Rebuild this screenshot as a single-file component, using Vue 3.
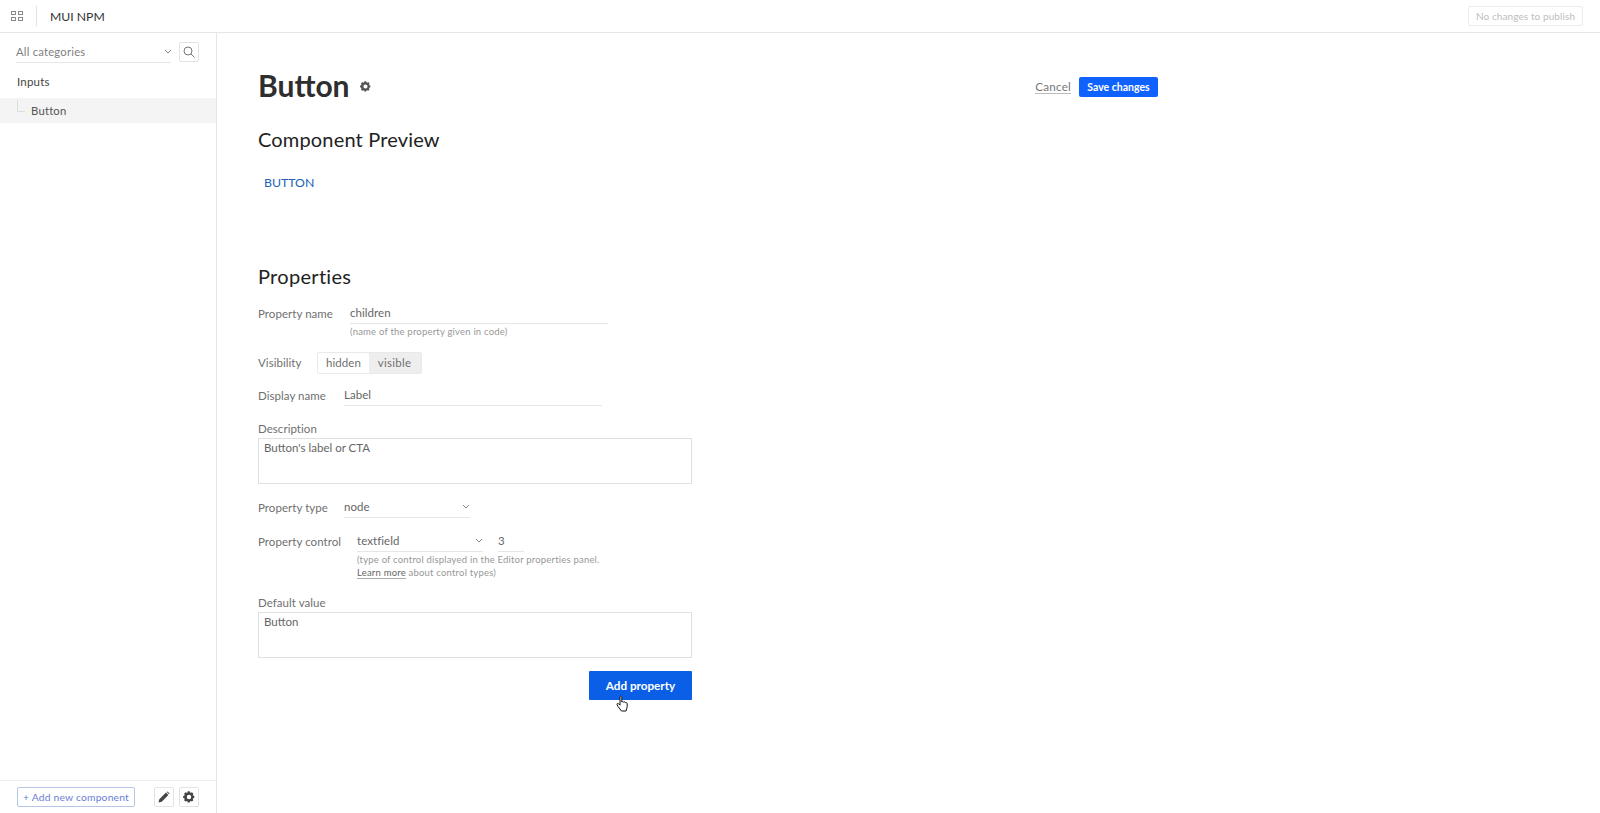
<script setup>
const gear = "M12 8.2a3.8 3.8 0 1 0 0 7.6 3.8 3.8 0 0 0 0-7.6zm9 5.4-2 .5a7.2 7.2 0 0 1-.6 1.5l1 1.8-2.4 2.4-1.8-1a7.2 7.2 0 0 1-1.5.6l-.5 2h-3.4l-.5-2a7.2 7.2 0 0 1-1.5-.6l-1.8 1-2.4-2.4 1-1.8a7.2 7.2 0 0 1-.6-1.5l-2-.5v-3.4l2-.5a7.2 7.2 0 0 1 .6-1.5l-1-1.8L6.1 3.9l1.8 1a7.2 7.2 0 0 1 1.5-.6l.5-2h3.4l.5 2a7.2 7.2 0 0 1 1.5.6l1.8-1 2.4 2.4-1 1.8a7.2 7.2 0 0 1 .6 1.5l2 .5z"
</script>

<template>
  <div class="page">
    <header class="top">
      <svg class="grid-icon" width="12" height="12" viewBox="0 0 12 12" fill="none" stroke="#888" stroke-width="1">
        <rect x="0.5" y="1.5" width="4" height="3" /><rect x="7.5" y="1.5" width="4" height="3" />
        <rect x="0.5" y="7.5" width="4" height="3" /><rect x="7.5" y="7.5" width="4" height="3" />
      </svg>
      <span class="top-sep"></span>
      <span class="brand">MUI NPM</span>
      <button class="publish">No changes to publish</button>
    </header>
    <div class="body">
      <aside class="side">
        <div class="side-main">
          <div class="filter">
            <div class="cat">
              <span>All categories</span>
              <svg width="8" height="5" viewBox="0 0 8 5" fill="none" stroke="#888"><path d="M1 1l3 3 3-3" /></svg>
            </div>
            <span class="square">
              <svg width="12" height="12" viewBox="0 0 12 12" fill="none" stroke="#777"><circle cx="5" cy="5" r="4" /><path d="M8 8l3.5 3.5" /></svg>
            </span>
          </div>
          <div class="group">Inputs</div>
          <div class="item"><span class="elbow"></span>Button</div>
        </div>
        <footer class="side-foot">
          <button class="add">+ Add new component</button>
          <span class="square">
            <svg width="12" height="12" viewBox="0 0 12 12" fill="#444"><path d="M0.5 11.5l.8-3.2L8 1.6 10.4 4l-6.7 6.700zM8.700.9l.8-.5 2.100 2.100-.5.8z" /></svg>
          </span>
          <span class="square">
            <svg width="14" height="14" viewBox="0 0 24 24" fill="#444" fill-rule="evenodd"><path :d="gear" /></svg>
          </span>
        </footer>
      </aside>
      <main class="main">
        <div class="head">
          <div class="title-wrap">
            <h1>Button</h1>
            <svg class="title-gear" width="13" height="13" viewBox="0 0 24 24" fill="#555" fill-rule="evenodd"><path :d="gear" /></svg>
          </div>
          <div class="actions">
            <a class="cancel">Cancel</a>
            <button class="save">Save changes</button>
          </div>
        </div>
        <h2 class="preview-title">Component Preview</h2>
        <div class="preview-btn">BUTTON</div>
        <h2 class="props-title">Properties</h2>
        <form class="form">
          <div class="row name-row">
            <label>Property name</label>
            <div class="col">
              <div class="field w258">children</div>
              <div class="hint first">(name of the property given in code)</div>
            </div>
          </div>
          <div class="row vis-row">
            <label>Visibility</label>
            <div class="toggle"><span class="opt">hidden</span><span class="opt on">visible</span></div>
          </div>
          <div class="row disp-row">
            <label>Display name</label>
            <div class="field w258">Label</div>
          </div>
          <div class="block desc-block">
            <label>Description</label>
            <div class="area">Button's label or CTA</div>
          </div>
          <div class="row type-row">
            <label>Property type</label>
            <div class="field sel w126">node
              <svg width="8" height="5" viewBox="0 0 8 5" fill="none" stroke="#888"><path d="M1 1l3 3 3-3" /></svg>
            </div>
          </div>
          <div class="row ctrl-row">
            <label>Property control</label>
            <div class="col">
              <div class="ctrl-fields">
                <div class="field sel w126">textfield
                  <svg width="8" height="5" viewBox="0 0 8 5" fill="none" stroke="#888"><path d="M1 1l3 3 3-3" /></svg>
                </div>
                <div class="field w26">3</div>
              </div>
              <div class="hint two">(type of control displayed in the Editor properties panel.<br /><a>Learn more</a> about control types)</div>
            </div>
          </div>
          <div class="block def-block">
            <label>Default value</label>
            <div class="area">Button</div>
          </div>
          <div class="submit">
            <button type="button" class="add-prop">Add property</button>
            <svg class="cursor" width="14" height="18" viewBox="0 0 14 18" fill="#fff" stroke="#111" stroke-width="1">
              <path d="M4 1.500c.8-.8 1.800-.3 1.800.7V7c.6-.7 1.700-.5 1.900.3.600-.6 1.600-.4 1.800.4.700-.4 1.600 0 1.700.9.200 1.800.1 3.500-.5 5.100l-.7 2.300H5.500L2 11.500 1 9.500c-.3-.9.800-1.500 1.500-.8L4 10.200z" />
            </svg>
          </div>
        </form>
      </main>
    </div>
  </div>
</template>

<style>
html, body { margin: 0; background: #fff; }
</style>

<style scoped>
.page { height: 813px; display: flex; flex-direction: column; overflow: hidden; font-family: Lato, "Liberation Sans", sans-serif; color: #666; font-size: 11.5px; }
.top { height: 32px; flex: none; display: flex; align-items: center; border-bottom: 1px solid #e6e6e6; box-sizing: content-box; }
.grid-icon { margin-left: 11px; }
.top-sep { width: 1px; height: 20px; background: #e2e2e2; margin-left: 13px; }
.brand { margin-left: 13px; font-size: 12.2px; color: #333; }
.publish { margin-left: auto; margin-right: 17px; width: 115px; height: 20px; padding: 0; border: 1px solid #ececec; border-radius: 2px; background: #fff; color: #bdbdbd; font: 10px Lato, sans-serif; letter-spacing: 0.1px; }
.body { flex: 1; display: flex; min-height: 0; }
.side { width: 216px; flex: none; border-right: 1px solid #e6e6e6; display: flex; flex-direction: column; }
.side-main { flex: 1; }
.filter { display: flex; align-items: center; gap: 8px; padding: 8px 17px 0 16px; }
.cat { width: 156px; height: 21px; border-bottom: 1px solid #e6e6e6; display: flex; align-items: center; justify-content: space-between; color: #808080; font-size: 11.3px; letter-spacing: 0.2px; box-sizing: content-box; }
.cat svg { margin-right: -1px; }
.square { width: 18px; height: 18px; border: 1px solid #e3e3e3; border-radius: 2px; display: flex; align-items: center; justify-content: center; flex: none; background: #fff; }
.group { margin: 12px 0 0 17px; font-size: 11.5px; line-height: 14px; color: #444; letter-spacing: 0.2px; }
.item { position: relative; margin-top: 9px; height: 25px; background: #f4f4f4; display: flex; align-items: center; padding-left: 31px; font-size: 11.3px; color: #555; letter-spacing: 0.2px; }
.elbow { position: absolute; left: 17px; top: 2px; width: 7px; height: 11px; border-left: 1px solid #ddd; border-bottom: 1px solid #ddd; }
.side-foot { height: 32px; border-top: 1px solid #eee; display: flex; align-items: center; padding-left: 17px; gap: 5px; flex: none; }
.add { width: 118px; height: 20px; padding: 0; border: 1px solid #b6c6e6; border-radius: 2px; background: #fff; color: #6a80d6; font: 10.3px Lato, sans-serif; letter-spacing: 0.2px; margin-right: 14px; }
.main { flex: 1; padding: 0 0 0 41px; min-width: 0; }
.head { width: 900px; height: 40px; margin-top: 33px; display: flex; justify-content: space-between; align-items: flex-start; }
.title-wrap { display: flex; align-items: center; gap: 9px; }
.title-gear { margin-top: 2px; }
h1 { margin: 0; font-size: 30px; line-height: 38px; font-weight: 700; color: #2e2e2e; }
.actions { display: flex; align-items: center; gap: 8px; margin-top: 11px; }
.cancel { font-size: 11.7px; color: #777; border-bottom: 1px solid #bbb; line-height: 13px; letter-spacing: 0.2px; }
.save { width: 79px; height: 20px; padding: 0; border: 0; border-radius: 2px; background: #0f62fe; color: #fff; font: 700 10.5px Lato, sans-serif; }
h2 { margin: 0; font-size: 20px; font-weight: 400; color: #222; line-height: 26px; }
.preview-title { margin-top: 20px; letter-spacing: 0.17px; }
.preview-btn { margin: 23px 0 0 6px; color: #2162b8; font-size: 12.3px; line-height: 16px; }
.props-title { margin-top: 72px; letter-spacing: 0.3px; }
.form { width: 434px; margin-top: 14px; }
.row { display: flex; align-items: flex-start; }
label { line-height: 16px; font-size: 11.5px; color: #707070; letter-spacing: 0.05px; white-space: nowrap; }
.field { height: 21px; line-height: 20px; box-sizing: border-box; border-bottom: 1px solid #e6e6e6; font-size: 11.5px; color: #666; letter-spacing: 0.05px; }
.w258 { width: 258px; }
.w126 { width: 126px; }
.w26 { width: 26px; }
.sel { display: flex; align-items: center; justify-content: space-between; }
.col { display: flex; flex-direction: column; }
.name-row label { width: 92px; padding-top: 3px; }
.hint { font-size: 9.5px; color: #979797; line-height: 13.5px; letter-spacing: 0.2px; }
.hint a { color: #666; border-bottom: 1px solid #aaa; }
.first { margin-top: 1px; }
.vis-row { margin-top: 13px; align-items: center; }
.vis-row label { width: 59px; }
.toggle { display: flex; height: 20px; border: 1px solid #e9e9e9; border-radius: 2px; }
.opt { padding: 0 8px; line-height: 20px; font-size: 11.5px; color: #707070; letter-spacing: 0.05px; }
.on { background: #eee; padding: 0 10px 0 9px; letter-spacing: 0.25px; }
.disp-row { margin-top: 11px; }
.disp-row label { width: 86px; padding-top: 3px; }
.block label { display: block; }
.desc-block { margin-top: 15px; }
.area { margin-top: 1px; height: 46px; box-sizing: border-box; border: 1px solid #e0e0e0; padding: 1px 5px; font-size: 11.5px; line-height: 16px; color: #666; }
.type-row { margin-top: 13px; }
.type-row label { width: 86px; padding-top: 3px; }
.ctrl-row { margin-top: 13px; }
.ctrl-row label { width: 99px; padding-top: 3px; }
.ctrl-fields { display: flex; gap: 15px; }
.two { margin-top: 1px; }
.def-block { margin-top: 15px; }
.submit { position: relative; display: flex; justify-content: flex-end; margin-top: 13px; }
.add-prop { width: 103px; height: 29px; padding: 0; border: 0; border-radius: 1px; background: #0a5fe6; color: #fff; font: 700 11.7px Lato, sans-serif; }
.cursor { position: absolute; left: 358px; top: 24px; }
</style>
